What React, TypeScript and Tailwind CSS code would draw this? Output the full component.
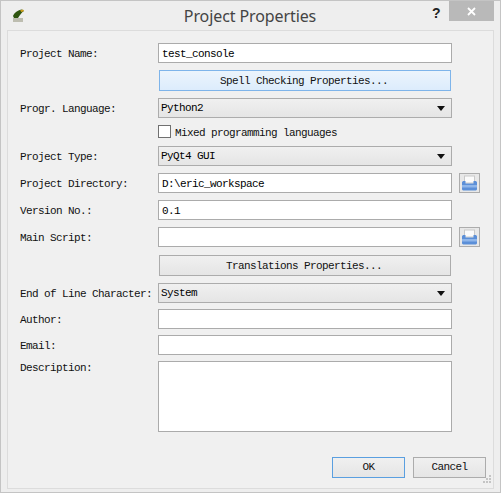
const font = { fontFamily: '"Liberation Mono", "DejaVu Sans Mono", monospace' }

const inputCls = "h-5 w-[294px] border border-[#ababab] bg-white pl-[3px] pt-px leading-[18px] text-black"
const comboCls = "flex h-5 w-[294px] items-center justify-between border border-[#acacac] bg-gradient-to-b from-[#f0f0f0] to-[#e5e5e5] pl-[2px] pr-[6px]"

function Row({ label, mt, children }: { label?: string; mt: string; children: React.ReactNode }) {
  return (
    <div className={`flex items-center ${mt}`}>
      <div className="h-5 w-[150px] pl-[12px] pt-px leading-5 whitespace-nowrap text-[#111]">{label}</div>
      {children}
    </div>
  )
}

function Arrow() {
  return (
    <svg width="8" height="5" viewBox="0 0 8 5">
      <path d="M0 0h8L4 5z" fill="#111" />
    </svg>
  )
}

function FolderIcon() {
  return (
    <button className="ml-[7px] flex h-5 w-[21px] items-center justify-center border border-[#acacac] bg-[#e8e8e8]">
      <svg width="17" height="16" viewBox="0 0 17 16">
        <rect x="3.500" y="1" width="10" height="7" fill="#fbfbfb" stroke="#c9c9c9" />
        <path d="M1 7.500C1 6.500 2 6 3 6h1.500v2.500h8V6H14c1 0 2 .5 2 1.500V14c0 1-1 1.500-2 1.500H3c-1 0-2-.5-2-1.500z" fill="#5b8fd8" />
        <rect x="1" y="10" width="15" height="2.500" fill="#8fb6ea" />
      </svg>
    </button>
  )
}

function Logo() {
  return (
    <svg width="13" height="14" viewBox="0 0 13 14">
      <path d="M1 7C2 4 6 1 10 0.500L12 2C10 3 8 6 6 9H2z" fill="#2f5510" />
      <path d="M8 1.500L11 0.500L12 2L9.500 3z" fill="#d6a01c" />
      <rect x="1" y="9" width="10" height="4" fill="#bdbdb0" />
    </svg>
  )
}

function Grip() {
  return (
    <svg className="absolute left-[482px] top-[474px]" width="8" height="8" viewBox="0 0 8 8">
      <path d="M6 0h2v2H6zM3 3h2v2H3zM6 3h2v2H6zM0 6h2v2H0zM3 6h2v2H3zM6 6h2v2H6z" fill="#c4c4c4" />
    </svg>
  )
}

export default function App() {
  return (
    <div className="relative h-[493px] w-[501px] overflow-hidden border border-[#c4c4c4] bg-[#eeeeee] text-[11px] tracking-[-0.6px]" style={font}>
      {/* Title bar */}
      <div className="relative flex h-[29px] items-center justify-center">
        <span className="absolute left-[11px] top-[8px]"><Logo /></span>
        <span className="ml-[-1px] text-[16px] tracking-[-0.1px] text-[#444]" style={{ fontFamily: '"Noto Sans", sans-serif' }}>Project Properties</span>
        <span className="absolute left-[431px] top-[2px] text-[14px] font-bold tracking-normal text-[#222]" style={{ fontFamily: '"Liberation Sans", sans-serif' }}>?</span>
        <div className="absolute left-[448px] top-0 flex h-5 w-[45px] items-center justify-center bg-[#b9b9b9]">
          <svg width="9" height="9" viewBox="0 0 9 9">
            <path d="M1 1l7 7M8 1l-7 7" stroke="#fff" strokeWidth="1.800" />
          </svg>
        </div>
      </div>

      {/* Content panel */}
      <div className="ml-[6px] h-[459px] w-[487px] border border-[#dcdcdc] bg-[#f0f0f0]">
        <Row label="Project Name:" mt="mt-[12px]">
          <div className={inputCls}>test_console</div>
        </Row>
        <Row mt="mt-[7px]">
          <button className="ml-px h-[21px] w-[292px] border border-[#7eb4ea] bg-gradient-to-b from-[#ecf4fc] to-[#dcecfc] pt-px pr-[2px] text-center text-[#111]">Spell Checking Properties...</button>
        </Row>
        <Row label="Progr. Language:" mt="mt-[7px]">
          <div className={comboCls}><span className="pt-px">Python2</span><Arrow /></div>
        </Row>
        <div className="ml-[150px] mt-[7px] flex h-[13px] items-center">
          <span className="h-[13px] w-[13px] border border-[#707070] bg-white" />
          <span className="ml-[4px] pt-[3px] text-[#111]">Mixed programming languages</span>
        </div>
        <Row label="Project Type:" mt="mt-[8px]">
          <div className={comboCls}><span className="pt-px">PyQt4 GUI</span><Arrow /></div>
        </Row>
        <Row label="Project Directory:" mt="mt-[7px]">
          <div className={inputCls}>D:\eric_workspace</div>
          <FolderIcon />
        </Row>
        <Row label="Version No.:" mt="mt-[7px]">
          <div className={inputCls}>0.1</div>
        </Row>
        <Row label="Main Script:" mt="mt-[7px]">
          <div className={inputCls} />
          <FolderIcon />
        </Row>
        <Row mt="mt-[8px]">
          <button className="ml-px h-[21px] w-[292px] border border-[#acacac] bg-gradient-to-b from-[#f0f0f0] to-[#e5e5e5] pt-px pr-[2px] text-center text-[#111]">Translations Properties...</button>
        </Row>
        <Row label="End of Line Character:" mt="mt-[7px]">
          <div className={comboCls}><span className="pt-px">System</span><Arrow /></div>
        </Row>
        <Row label="Author:" mt="mt-[6px]">
          <div className={inputCls} />
        </Row>
        <Row label="Email:" mt="mt-[6px]">
          <div className={inputCls} />
        </Row>
        <div className="mt-[6px] flex">
          <div className="w-[150px] pl-[12px] leading-[14px] text-[#111]">Description:</div>
          <div className="h-[71px] w-[294px] border border-[#ababab] bg-white" />
        </div>
        <div className="mt-[25px] flex justify-end gap-[8px] pr-[7px]">
          <button className="h-[21px] w-[73px] border border-[#5a9fe0] bg-gradient-to-b from-[#f0f0f0] to-[#e5e5e5] text-[#111]">OK</button>
          <button className="h-[21px] w-[73px] border border-[#acacac] bg-gradient-to-b from-[#f0f0f0] to-[#e5e5e5] text-[#111]">Cancel</button>
        </div>
      </div>
      <Grip />
    </div>
  )
}
